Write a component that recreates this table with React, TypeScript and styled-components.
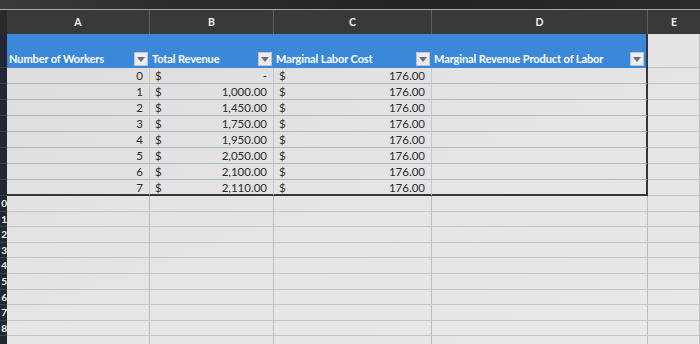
import React from 'react';
import styled, { createGlobalStyle } from 'styled-components';

const COLS = '7px 143px 124px 158px 216px 1fr';

const GlobalStyle = createGlobalStyle`
  html, body {
    margin: 0;
    padding: 0;
    background: #1e1e1e;
    overflow: hidden;
  }
  body {
    font-family: Lato, 'Open Sans', 'Liberation Sans', sans-serif;
  }
`;

const Screen = styled.div`
  width: 700px;
  height: 344px;
  display: flex;
  flex-direction: column;
  overflow: hidden;
`;

const Bezel = styled.div`
  height: 9px;
  flex-shrink: 0;
  background: linear-gradient(90deg, #3a3a3a 0%, #2c2c2c 25%, #222 60%, #2a2a2a 100%);
  border-bottom: 1px solid #a8a8a8;
`;

const LetterBar = styled.div`
  display: grid;
  grid-template-columns: ${COLS};
  height: 24px;
  flex-shrink: 0;
  background: #393939;
`;

const Letter = styled.div`
  display: flex;
  align-items: center;
  justify-content: center;
  color: #f2f2f2;
  font-size: 10.5px;
  font-weight: 700;
  border-right: 1px solid #5e5e5e;
  &:first-child {
    background: #2a2a2a;
    border-right: none;
  }
  &:last-child {
    border-right: none;
  }
`;

const Sheet = styled.div`
  flex: 1;
  min-height: 0;
  overflow: hidden;
  display: flex;
  flex-direction: column;
  background: linear-gradient(160deg, #dcdcdc 0%, #e4e4e4 45%, #e9e9e9 100%);
`;

const Row = styled.div<{ $h: number }>`
  display: grid;
  grid-template-columns: ${COLS};
  height: ${(p) => p.$h}px;
  flex-shrink: 0;
`;

const RowNum = styled.div`
  background: #232733;
  color: #f4f4f4;
  font-size: 10px;
  font-weight: 700;
  line-height: 15px;
  overflow: hidden;
  display: flex;
  justify-content: flex-end;
  border-bottom: 1px solid #3c4150;
`;

type Tone = 'head' | 'data' | 'blank' | 'out';

const Cell = styled.div<{ $tone: Tone; $edge?: boolean; $last?: boolean; $align?: 'left' | 'right' }>`
  box-sizing: border-box;
  display: flex;
  align-items: ${(p) => (p.$tone === 'head' ? 'flex-end' : 'center')};
  justify-content: ${(p) => (p.$align === 'right' ? 'flex-end' : 'space-between')};
  gap: 4px;
  padding: ${(p) => (p.$tone === 'head' ? '0 2px 2px 2px' : '0 6px 0 5px')};
  overflow: hidden;
  white-space: nowrap;
  color: #2b2b2b;
  font-size: 11.5px;
  line-height: 15px;
  background: ${(p) => (p.$tone === 'head' ? '#3b88d8' : 'transparent')};
  border-bottom: ${(p) =>
    p.$last ? '2px solid #34363b' : p.$tone === 'head' ? 'none' : p.$tone === 'data' ? '1px solid #aeb6c3' : '1px solid #c4c4c4'};
  border-right: ${(p) =>
    p.$edge ? '2px solid #34363b' : p.$tone === 'head' ? 'none' : p.$tone === 'data' ? '1px solid #c3c8d0' : '1px solid #bdbdbd'};
`;

const HeadLabel = styled.span`
  color: #fff;
  font-size: 11px;
  font-weight: 700;
  line-height: 14px;
  letter-spacing: -0.1px;
  flex: 1;
  overflow: hidden;
`;

const FilterBtn = styled.span`
  width: 14px;
  height: 14px;
  flex-shrink: 0;
  box-sizing: border-box;
  background: #ececec;
  border: 1px solid #b9c4d2;
  display: flex;
  align-items: center;
  justify-content: center;
`;

const Dollar = styled.span``;
const Amount = styled.span``;

const Filter = () => (
  <FilterBtn>
    <svg width="8" height="5" viewBox="0 0 8 5">
      <polygon points="0,0 8,0 4,5" fill="#6a6e73" />
    </svg>
  </FilterBtn>
);

const data = [
  { workers: 0, revenue: '-', cost: '176.00' },
  { workers: 1, revenue: '1,000.00', cost: '176.00' },
  { workers: 2, revenue: '1,450.00', cost: '176.00' },
  { workers: 3, revenue: '1,750.00', cost: '176.00' },
  { workers: 4, revenue: '1,950.00', cost: '176.00' },
  { workers: 5, revenue: '2,050.00', cost: '176.00' },
  { workers: 6, revenue: '2,100.00', cost: '176.00' },
  { workers: 7, revenue: '2,110.00', cost: '176.00' },
];

const headers = ['Number of Workers', 'Total Revenue', 'Marginal Labor Cost', 'Marginal Revenue Product of Labor'];

export default function App() {
  const blankRows = Array.from({ length: 10 }, (_, i) => i + 10);

  return (
    <Screen>
      <GlobalStyle />
      <Bezel />
      <LetterBar>
        <Letter />
        {['A', 'B', 'C', 'D', 'E'].map((l) => (
          <Letter key={l}>{l}</Letter>
        ))}
      </LetterBar>
      <Sheet>
        <Row $h={34}>
          <RowNum />
          {headers.map((h, i) => (
            <Cell key={h} $tone="head" $edge={i === 3}>
              <HeadLabel>{h}</HeadLabel>
              <Filter />
            </Cell>
          ))}
          <Cell $tone="out" />
        </Row>
        {data.map((d, i) => {
          const last = i === data.length - 1;
          return (
            <Row $h={16} key={d.workers}>
              <RowNum />
              <Cell $tone="data" $align="right" $last={last}>
                {d.workers}
              </Cell>
              <Cell $tone="data" $last={last}>
                <Dollar>$</Dollar>
                <Amount>{d.revenue}</Amount>
              </Cell>
              <Cell $tone="data" $last={last}>
                <Dollar>$</Dollar>
                <Amount>{d.cost}</Amount>
              </Cell>
              <Cell $tone="data" $edge $last={last} />
              <Cell $tone="out" />
            </Row>
          );
        })}
        {blankRows.map((n) => (
          <Row $h={15.6} key={n}>
            <RowNum>{n < 19 ? n % 10 : ''}</RowNum>
            <Cell $tone="blank" />
            <Cell $tone="blank" />
            <Cell $tone="blank" />
            <Cell $tone="blank" />
            <Cell $tone="blank" />
          </Row>
        ))}
      </Sheet>
    </Screen>
  );
}
